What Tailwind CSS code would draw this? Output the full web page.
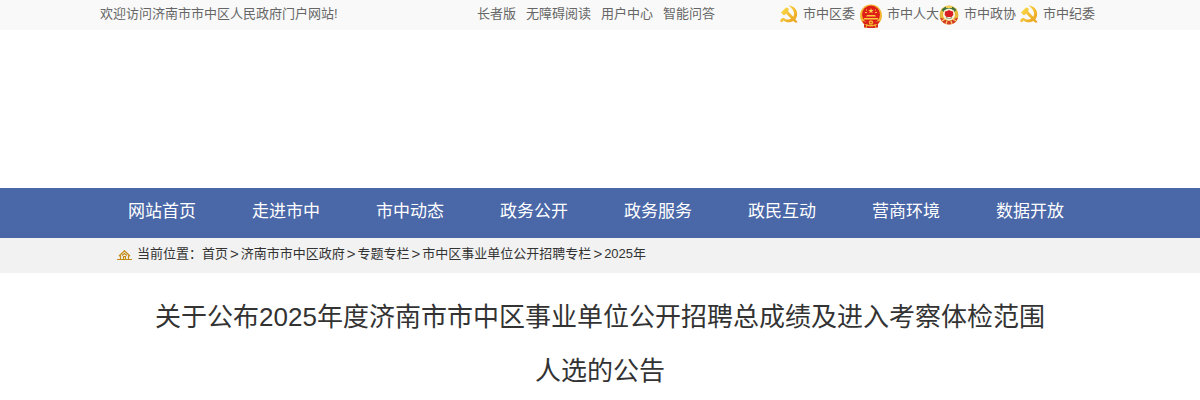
<!DOCTYPE html>
<html lang="zh-CN">
<head>
    <meta charset="UTF-8">
    <meta name="viewport" content="width=device-width, initial-scale=1.0">
    <title>关于公布2025年度济南市市中区事业单位公开招聘总成绩及进入考察体检范围人选的公告</title>
    <script src="https://cdn.jsdelivr.net/npm/@tailwindcss/browser@4"></script>
</head>
<body class="bg-white font-['Liberation_Sans','Noto_Sans_CJK_SC',sans-serif] text-[13px] text-[#333]">
    <!-- Shared emblem -->
    <svg class="absolute size-0">
        <defs>
            <linearGradient id="gold" x1="0" y1="0" x2="1" y2="1">
                <stop offset="0" stop-color="#ffe24a"/>
                <stop offset="1" stop-color="#e89d1c"/>
            </linearGradient>
            <symbol id="party" viewBox="0 0 18 18">
                <path d="M8.500 .5C14.500 1 18 5.500 17 10.500C16.800 12 16 13.500 15.200 14.500L17.500 16.700L16 18L13.500 15.900C9.500 18 6 17.500 3.500 15.500L2 17.300L0 16.500L1 14L3.200 12.700C6.500 15 9 15 11 13.600L6 8.600L4 10.400L1 7.400L6 2.500L9 3.800L8 6.200L13.200 11.700C15.300 8.500 13.500 3.800 8.500 .5Z" fill="url(#gold)"/>
            </symbol>
        </defs>
    </svg>

    <!-- Top bar -->
    <header class="bg-[#f9f9f9] text-[#666]">
        <div class="mx-auto flex h-[30px] max-w-[1000px] leading-7">
            <p class="w-[377px]">欢迎访问济南市市中区人民政府门户网站!</p>
            <nav class="flex w-[303px] gap-[10px]">
                <a href="#">长者版</a>
                <a href="#">无障碍阅读</a>
                <a href="#">用户中心</a>
                <a href="#">智能问答</a>
            </nav>
            <nav class="flex whitespace-nowrap">
                <a href="#" class="flex w-20 gap-[5px]">
                    <svg class="mt-[5px] size-[18px]"><use href="#party"/></svg>市中区委
                </a>
                <a href="#" class="flex gap-[5px]">
                    <svg class="mt-1 h-6 w-[22px]" viewBox="0 0 22 24">
                        <path d="M4 16L4 23.500L8 24H14L18 23.500L18 16Z" fill="#d8231c"/>
                        <circle cx="11" cy="11.500" r="11" fill="#f2b632"/>
                        <circle cx="11" cy="10.500" r="9" fill="#de1f18"/>
                        <path d="M11 4L11.700 6H13.800L12.100 7.200L12.700 9.200L11 8L9.300 9.200L9.900 7.200L8.200 6H10.300Z" fill="#ffd84a"/>
                        <path d="M5 8h2v1H5zM15 8h2v1h-2zM6 5.500h1v1H6zM15 5.500h1v1h-1zM7 11h8l1 1.500H6zM4 14h14v1.500H4z" fill="#ffc83c"/>
                        <path d="M2 17Q11 19 20 17L18 20Q11 22 4 20Z" fill="#d8231c"/>
                        <circle cx="11" cy="18.500" r="2.200" fill="#f4b52f"/>
                        <circle cx="11" cy="18.500" r=".8" fill="#d8231c"/>
                        <path d="M7 20L6 24M15 20L16 24" stroke="#f4b52f" stroke-width="1"/>
                    </svg>市中人大
                </a>
                <a href="#" class="flex w-[81px] gap-[5px]">
                    <svg class="mt-[5px] size-5" viewBox="0 0 20 20">
                        <circle cx="10" cy="10" r="9.500" fill="#e6b93b"/>
                        <path d="M2.500 5A9.500 9.500 0 0 1 17.500 5L15 7A6.500 6.500 0 0 0 5 7Z" fill="#3f743d"/>
                        <path d="M7 .8h6v2.200H7z" fill="#efcf55"/>
                        <path d="M1 12.500L5 14Q10 18 15 14L19 12.500Q17 19.500 10 19.500T1 12.500Z" fill="#d63b27"/>
                        <path d="M3 16L6 14M7 19L8 16M13 19L12 16M17 16L14 14" stroke="#f6d36c" stroke-width="1.200"/>
                        <circle cx="10" cy="9.500" r="6" fill="#fff3dc"/>
                        <path d="M10 5L12 6L14 6.500L14.300 10L12.500 12H7.500L5.700 10L6 6.500L8 6Z" fill="#d81e22"/>
                        <path d="M6.500 12Q10 14 13.500 12L12.500 13.500H7.500Z" fill="#44743d"/>
                    </svg>市中政协
                </a>
                <a href="#" class="flex gap-[5px]">
                    <svg class="mt-[5px] size-[18px]"><use href="#party"/></svg>市中纪委
                </a>
            </nav>
        </div>
    </header>

    <!-- Banner space -->
    <div class="h-[158px]"></div>

    <!-- Main navigation -->
    <nav class="bg-[#4a67a8]">
        <div class="mx-auto flex h-[50px] max-w-[1000px] text-center text-[17px] leading-[48px] text-white">
            <a href="#" class="w-[124px]">网站首页</a>
            <a href="#" class="w-[124px]">走进市中</a>
            <a href="#" class="w-[124px]">市中动态</a>
            <a href="#" class="w-[124px]">政务公开</a>
            <a href="#" class="w-[124px]">政务服务</a>
            <a href="#" class="w-[124px]">政民互动</a>
            <a href="#" class="w-[124px]">营商环境</a>
            <a href="#" class="w-[124px]">数据开放</a>
        </div>
    </nav>

    <!-- Breadcrumb -->
    <div class="bg-[#f2f2f2]">
        <div class="mx-auto flex h-[35px] max-w-[1000px] pl-[17px] leading-8">
            <svg class="mt-3 mr-[5px] h-[10px] w-[15px]" viewBox="0 0 15 10" fill="none" stroke="#c48a14" stroke-width="1.200">
                <path d="M0 9.500H15M2 6L7.500 .8L13 6M3.500 5.500V9M11.500 5.500V9M6.500 9V6.500H8.500V9M5 5.500L7.500 3.500L10 5.500"/>
            </svg>
            <span>当前位置：</span>
            <a href="#">首页</a>
            <span class="px-0.5 text-[15px] leading-8">&gt;</span>
            <a href="#">济南市市中区政府</a>
            <span class="px-0.5 text-[15px] leading-8">&gt;</span>
            <a href="#">专题专栏</a>
            <span class="px-0.5 text-[15px] leading-8">&gt;</span>
            <a href="#">市中区事业单位公开招聘专栏</a>
            <span class="px-0.5 text-[15px] leading-8">&gt;</span>
            <a href="#">2025年</a>
        </div>
    </div>

    <!-- Article title -->
    <main class="mx-auto max-w-[900px] pt-[17px]">
        <h1 class="text-center text-[26px] leading-[54px]">关于公布2025年度济南市市中区事业单位公开招聘总成绩及进入考察体检范围人选的公告</h1>
    </main>
</body>
</html>
